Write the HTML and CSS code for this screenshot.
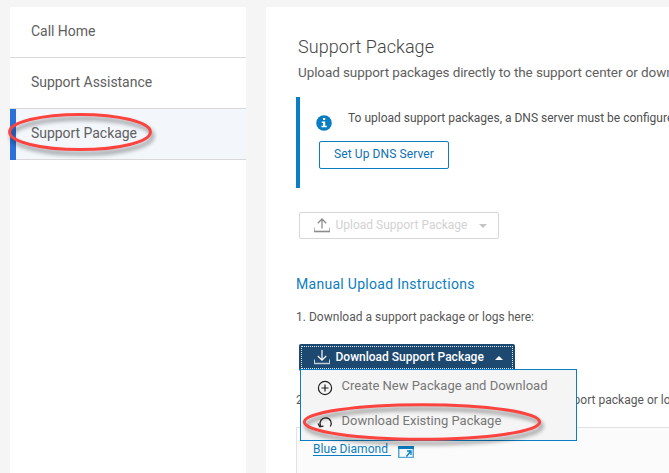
FILE: index.html
```html
<!DOCTYPE html>
<html lang="en">
<head>
<meta charset="utf-8">
<title>Support Package</title>
<link rel="stylesheet" href="styles.css">
</head>
<body>
<div class="page">
  <nav class="sidebar">
    <a class="nav-item">Call Home</a>
    <a class="nav-item">Support Assistance</a>
    <a class="nav-item active">Support Package
      <svg class="mark mark-nav" width="160" height="54"><ellipse cx="80" cy="25" rx="70.4" ry="17.6"/></svg>
    </a>
  </nav>
  <main class="panel">
    <h1>Support Package</h1>
    <p class="lead">Upload support packages directly to the support center or download</p>
    <section class="notice">
      <div class="notice-row">
        <svg class="info" width="16" height="16" viewBox="0 0 16 16"><circle cx="8" cy="8" r="7.8" fill="#0b7dc2"/><path d="M7 3h2.2v2H7zM5.8 6.5h3.4v4.2h1.6v1.5H5.4v-1.5H7V8H5.800z" fill="#fff"/></svg>
        <span class="notice-text">To upload support packages, a DNS server must be configured</span>
      </div>
      <button class="btn outline">Set Up DNS Server</button>
    </section>
    <button class="btn disabled">
      <svg width="16" height="15" viewBox="0 0 16 15" fill="none"><path d="M.5 9.500V14M15.500 9.500V14" stroke="#bbb"/><path d="M0 13.500h16" stroke="#8c8c8c" stroke-width="1.600"/><path d="M8 10.500V1.200M3.800 5.200 8 1l4.200 4.200" stroke="#8c8c8c" stroke-width="1.300"/></svg>
      <span>Upload Support Package</span>
      <i class="caret down"></i>
    </button>
    <h2>Manual Upload Instructions</h2>
    <p class="step">1. Download a support package or logs here:</p>
    <div class="dropdown">
      <button class="btn primary">
        <svg width="16" height="15" viewBox="0 0 16 15" fill="none" stroke="#fff"><path d="M.5 9.500V14M15.500 9.500V14" stroke="#c3cfda"/><path d="M0 13.500h16" stroke="#c3cfda" stroke-width="1.500"/><path d="M8 0v10M3.800 6 8 10.200 12.200 6" stroke-width="1.200"/></svg>
        <span>Download Support Package</span>
        <i class="caret up"></i>
      </button>
      <div class="menu">
        <div class="menu-item">
          <svg width="16" height="16" viewBox="0 0 16 16" fill="none" stroke="#222" stroke-width="1.200"><circle cx="8" cy="8" r="6.600"/><path d="M8 4.500v7M4.500 8h7"/></svg>
          <span>Create New Package and Download</span>
        </div>
        <div class="menu-item">
          <svg class="undo" width="16" height="16" viewBox="0 0 16 16" fill="none" stroke="#222" stroke-width="1.300"><path d="M13.300 12.500A5.600 5.600 0 1 0 3.600 11.800M1 9.500l1.800 3.200 3.700-.5"/></svg>
          <span>Download Existing Package</span>
        </div>
        <svg class="mark mark-menu" width="252" height="56"><ellipse cx="123" cy="24" rx="117.700" ry="17.300"/></svg>
      </div>
    </div>
    <p class="step second"><span>2.</span><span>support package or logs</span></p>
    <section class="links">
      <a class="link">Blue Diamond&nbsp;</a>
      <svg width="16" height="12" viewBox="0 0 16 12"><path d="M0 0h16v12H0z" fill="#58a8d8"/><path d="M0 0h16v3H0z" fill="#0b7dc2"/><path d="M1.500 3h13v7.800h-13z" fill="#f4fafd"/><path d="M8.500 10.500 12.500 5.500M9 5h4v4" fill="none" stroke="#0b7dc2" stroke-width="1.300"/></svg>
    </section>
  </main>
</div>
</body>
</html>
```

FILE: styles.css
```css
* { box-sizing: border-box; }
body {
  margin: 0;
  height: 473px;
  overflow: hidden;
  background: #f5f5f5;
  color: #606060;
  font: 14px/20px Roboto, "Liberation Sans", sans-serif;
}
h1, h2, p { margin: 0; font-weight: 400; }
svg { display: block; flex: none; }
.page { display: flex; gap: 20px; height: 473px; padding: 7px 0 0 10px; }
.sidebar { flex: 0 0 236px; background: #fff; }
.nav-item {
  position: relative;
  display: block;
  height: 51px;
  padding: 14px 0 0 21px;
  border-bottom: 1px solid #d8d8d8;
  letter-spacing: -.04px;
}
.nav-item.active { background: #f3f7fc; }
.nav-item.active::before {
  content: "";
  position: absolute;
  left: 0;
  top: 0;
  width: 6px;
  height: 51px;
  background: #2a70d8;
}
.mark { position: absolute; overflow: visible; }
.mark ellipse {
  fill: none;
  stroke: #fb4340;
  stroke-width: 3;
  filter: drop-shadow(2px 4px 2px rgba(0, 0, 0, .45));
}
.mark-nav { left: -10px; top: -2px; }
.mark-menu { left: -2px; top: 28px; }
.panel { flex: 1; min-width: 0; padding: 28px 0 0 30px; background: #fff; white-space: nowrap; overflow: hidden; }
h1 { margin-left: 2px; font-size: 18px; line-height: 24px; font-weight: 300; letter-spacing: .07px; color: #444; }
.lead { margin: 3px 0 0 2px; font-size: 13.5px; letter-spacing: -.09px; }
.notice { height: 91px; margin-top: 15px; padding: 13px 0 0 19px; border-left: 4px solid #0b7dc2; }
.notice-row { display: flex; gap: 16px; height: 31px; margin-left: -3px; font-size: 12px; line-height: 16px; color: #505050; }
.info { margin-top: 5px; }
.btn {
  display: flex;
  align-items: center;
  margin: 0;
  font: 12px/16px Roboto, "Liberation Sans", sans-serif;
  border-radius: 2px;
  background: #fff;
}
.outline { width: 130px; height: 28px; padding: 0 0 2px 14px; border: 1px solid #0b7dc2; color: #0b70b4; letter-spacing: .1px; }
.disabled, .primary { margin-left: 3px; padding: 0 0 2px 14px; }
.disabled { width: 200px; height: 27px; margin-top: 24px; border: 1px solid #d6d6d6; color: #d2d2d2; }
.btn svg { margin: 2px 5.5px 0 0; }
.caret { margin: 2px 0 0 11.5px; border: 4px solid transparent; }
.caret.down { border-top-color: #c4c4c4; border-bottom: 0; }
.caret.up { border-bottom-color: #fff; border-top: 0; }
h2 { margin-top: 35px; font-size: 14px; line-height: 20px; letter-spacing: .29px; color: #0b7dc2; }
.step { margin: 15px 0 0; font-size: 12px; line-height: 16px; letter-spacing: .02px; color: #585858; }
.dropdown { position: relative; height: 27px; margin-top: 19px; }
.primary {
  width: 216px;
  height: 27px;
  border: 0;
  outline: 1px dotted #dce6ee;
  outline-offset: -3px;
  background: #1d4971;
  color: #fff;
  font-weight: 500;
}
.primary svg { margin-left: 1px; }
.menu {
  position: absolute;
  left: 4px;
  top: 25px;
  width: 277px;
  height: 72px;
  padding: 6px 0 0 16px;
  border: 1px solid #0b7dc2;
  background: #f5f5f5;
  color: #777;
}
.menu-item { display: flex; gap: 8.5px; height: 35px; font-size: 13px; line-height: 20px; }
.menu-item svg { margin-top: 4px; }
.menu-item .undo { margin-top: 3px; }
.second { display: flex; gap: 248px; margin-top: 21px; }
.links { display: flex; gap: 6.5px; height: 60px; margin-top: 19px; padding: 13px 0 0 16px; border: 1px solid #e2e2e2; border-right: 0; background: #fbfbfb; }
.link { height: 17px; font-size: 12px; line-height: 16px; letter-spacing: .05px; color: #0b7dc2; text-decoration: underline; text-underline-offset: 2px; }
.links svg { margin-top: 5px; }
```
